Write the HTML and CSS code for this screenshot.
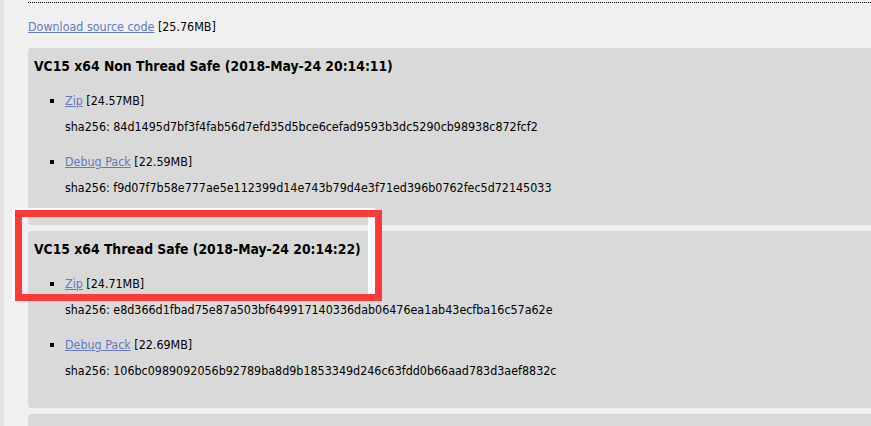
FILE: index.html
```html
<!DOCTYPE html>
<html lang="en">
<head>
  <meta charset="UTF-8">
  <title>PHP for Windows - Downloads</title>
  <link rel="stylesheet" href="styles.css">
</head>
<body>

  <div class="page">
    <div class="content">
      <div class="rule"></div>

      <p class="source"><a href="#">Download source code</a> [25.76MB]</p>

      <div class="build">
        <h4>VC15 x64 Non Thread Safe (2018-May-24 20:14:11)</h4>
        <ul>
          <li>
            <p class="file"><a href="#">Zip</a> [24.57MB]</p>
            <p class="sha">sha256: 84d1495d7bf3f4fab56d7efd35d5bce6cefad9593b3dc5290cb98938c872fcf2</p>
          </li>
          <li>
            <p class="file"><a href="#">Debug Pack</a> [22.59MB]</p>
            <p class="sha">sha256: f9d07f7b58e777ae5e112399d14e743b79d4e3f71ed396b0762fec5d72145033</p>
          </li>
        </ul>
      </div>

      <div class="build">
        <h4>VC15 x64 Thread Safe (2018-May-24 20:14:22)</h4>
        <ul>
          <li>
            <p class="file"><a href="#">Zip</a> [24.71MB]</p>
            <p class="sha">sha256: e8d366d1fbad75e87a503bf649917140336dab06476ea1ab43ecfba16c57a62e</p>
          </li>
          <li>
            <p class="file"><a href="#">Debug Pack</a> [22.69MB]</p>
            <p class="sha">sha256: 106bc0989092056b92789ba8d9b1853349d246c63fdd0b66aad783d3aef8832c</p>
          </li>
        </ul>
      </div>

      <div class="build build-next"></div>
    </div>

    <!-- screenshot annotation -->
    <div class="mark-glow"></div>
    <div class="mark"></div>
  </div>

</body>
</html>
```

FILE: styles.css
```css
body {
  margin: 0;
  background-color: #f0f0f0;
  font-family: "DejaVu Sans", Verdana, sans-serif;
  font-stretch: condensed;
  font-size: 12.4px;
  color: #000;
}

.page {
  position: relative;
  height: 426px;
  overflow: hidden;
  border-left: 4px solid #e3e3e3;
}

.content {
  padding: 2px 0 0 24px;
}

.rule {
  border-top: 1px dotted #000;
}

a {
  color: #6579bb;
}

.source {
  margin: 16px 0 0;
  line-height: 16px;
}

.build {
  background-color: #d9d9d9;
  border-radius: 4px 0 0 4px;
  padding: 8px 0 27px 6px;
  margin-top: 13px;
  height: 142px;
}

.build + .build {
  margin-top: 6px;
}

.build-next {
  height: 20px;
}

h4 {
  margin: 0;
  font-size: 13.8px;
  line-height: 20px;
}

ul {
  list-style: none;
  margin: 15px 0 0;
  padding: 0;
}

li {
  position: relative;
  padding-left: 31px;
}

li + li {
  margin-top: 15px;
}

li::before {
  content: "";
  position: absolute;
  left: 16px;
  top: 8px;
  width: 4px;
  height: 4px;
  background-color: #000;
}

.file,
.sha {
  margin: 0;
  line-height: 20px;
}

.sha {
  margin-top: 6px;
}

.mark-glow {
  position: absolute;
  left: 8px;
  top: 208px;
  width: 363px;
  height: 93px;
  box-sizing: border-box;
  border-top: 2px solid #fff;
  border-left: 3px solid #fff;
  border-right: 7px solid #fff;
}

.mark {
  position: absolute;
  left: 11px;
  top: 210px;
  width: 367px;
  height: 91px;
  box-sizing: border-box;
  border: 7px solid #fd3a3a;
}
```
